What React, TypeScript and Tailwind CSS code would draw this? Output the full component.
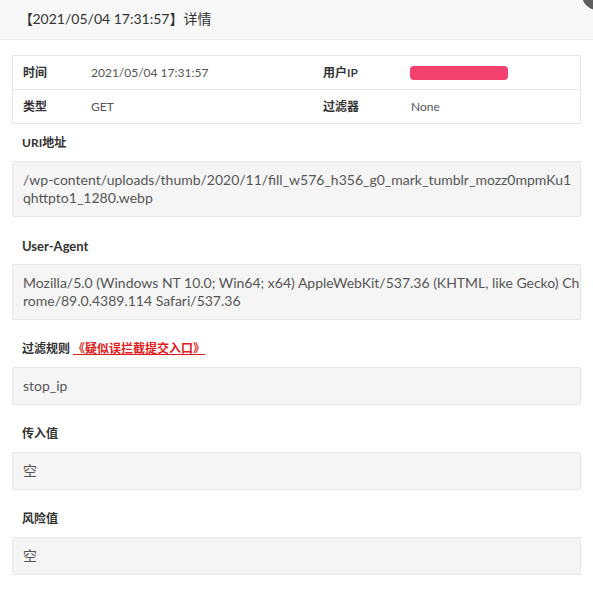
const font = "font-['Lato','Noto_Sans_CJK_SC',sans-serif]";

function Field({ label, children, className }: { label: React.ReactNode; children: React.ReactNode; className: string }) {
  return (
    <div className={className}>
      <div className="px-[10px] text-[12px] font-bold leading-[20px] text-[#333]">{label}</div>
      <div className="mt-[8px] rounded-[2px] border border-[#e6e6e6] bg-[#f5f5f5] px-[10px] py-[9px] text-[14px] leading-[18px] text-[#555] whitespace-nowrap">
        {children}
      </div>
    </div>
  );
}

export default function App() {
  return (
    <div className={`relative h-[593px] w-[593px] overflow-hidden bg-white ${font}`}>
      {/* close button peeking from the corner */}
      <div className="absolute left-[582px] top-[-20px] h-[30px] w-[30px] rounded-full bg-[#5f5f5f]" />

      <div className="h-[40px] border-b border-[#eee] bg-[#f8f8f8] pl-[19px] text-[14px] leading-[38px] text-[#333]">
        <span className="tracking-[-0.5px]">【</span>2021/05/04 17:31:57】详情
      </div>

      <div className="flex flex-col px-3 pt-[15px]">
        <div className="border border-[#e6e6e6] text-[12px] text-[#555]">
          <div className="grid h-[34px] grid-cols-[68px_232px_88px_1fr] items-center border-b border-[#e6e6e6]">
            <span className="pl-[10px] font-semibold text-[#333]">时间</span>
            <span className="pl-[10px]">2021/05/04 17:31:57</span>
            <span className="pl-[10px] font-semibold text-[#333]">用户IP</span>
            <span className="pl-[9px]">
              <span className="block h-[14px] w-[98px] rounded-[4px] bg-[#f5416d]" />
            </span>
          </div>
          <div className="grid h-[33px] grid-cols-[68px_232px_88px_1fr] items-center">
            <span className="pl-[10px] font-semibold text-[#333]">类型</span>
            <span className="pl-[10px]">GET</span>
            <span className="pl-[10px] font-semibold text-[#333]">过滤器</span>
            <span className="pl-[10px]">None</span>
          </div>
        </div>

        <Field className="mt-[9px]" label="URI地址">
          /wp-content/uploads/thumb/2020/11/fill_w576_h356_g0_mark_tumblr_mozz0mpmKu1
          <br />
          qhttpto1_1280.webp
        </Field>

        <Field className="mt-[19px]" label={<span className="block text-[13px] leading-[20px]">User-Agent</span>}>
          Mozilla/5.0 (Windows NT 10.0; Win64; x64) AppleWebKit/537.36 (KHTML, like Gecko) Ch
          <br />
          rome/89.0.4389.114 Safari/537.36
        </Field>

        <Field
          className="mt-[19px]"
          label={
            <>
              过滤规则{" "}
              <span className="text-[#e02020] underline">《疑似误拦截提交入口》</span>
            </>
          }
        >
          stop_ip
        </Field>

        <Field className="mt-[19px]" label="传入值">
          空
        </Field>

        <Field className="mt-[19px]" label="风险值">
          空
        </Field>
      </div>
    </div>
  );
}
